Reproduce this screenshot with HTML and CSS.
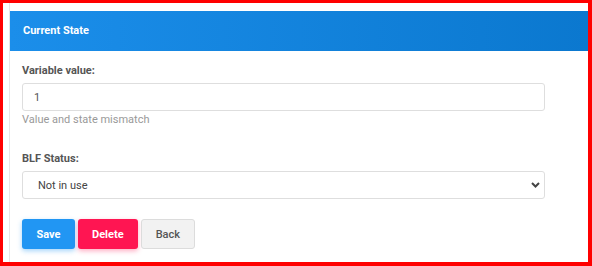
FILE: index.html
```html
<!DOCTYPE html>
<html lang="en">
<head>
    <meta charset="UTF-8">
    <title>Current State</title>
    <link rel="stylesheet" href="styles.css">
</head>
<body>
<div class="frame">
    <div class="page">
        <div class="card">
            <div class="card-header">Current State</div>
            <div class="card-body">
                <div class="form-group">
                    <label>Variable value:</label>
                    <input type="text" class="form-control" value="1">
                    <div class="help">Value and state mismatch</div>
                </div>
                <div class="form-group">
                    <label>BLF Status:</label>
                    <div class="select-wrap">
                        <select class="form-control select">
                            <option>Not in use</option>
                            <option>In use</option>
                            <option>Ringing</option>
                        </select>
                        <svg class="chevron" width="9" height="6" viewBox="0 0 9 6">
                            <path d="M1 1 L4.5 4.5 L8 1" fill="none" stroke="#444" stroke-width="2"/>
                        </svg>
                    </div>
                </div>
                <div class="actions">
                    <button class="btn btn-save">Save</button>
                    <button class="btn btn-delete">Delete</button>
                    <button class="btn btn-back">Back</button>
                </div>
            </div>
        </div>
    </div>
</div>
</body>
</html>
```

FILE: styles.css
```css
html, body {
    margin: 0;
    height: 100%;
}

body {
    font-family: Roboto, "Liberation Sans", sans-serif;
    color: #555;
    background: #fff;
}

.frame {
    box-sizing: border-box;
    width: 592px;
    height: 266px;
    border: solid #ff0000;
    border-width: 3px 4px 4px 3px;
    overflow: hidden;
}

.page {
    height: 100%;
    padding-left: 6px;
}

.card {
    height: 100%;
    border-left: 1px solid #e6e6e6;
    padding-top: 8px;
    box-sizing: border-box;
}

.card-header {
    height: 40px;
    line-height: 40px;
    padding-left: 13px;
    background: linear-gradient(to right, #1b8eea, #0b78cf);
    color: #fff;
    font-size: 11px;
    font-weight: bold;
}

.card-body {
    width: 523px;
    padding: 12px 0 0 12px;
}

.form-group {
    margin-bottom: 23px;
}

label {
    display: block;
    font-size: 11px;
    font-weight: bold;
    line-height: 16px;
    margin-bottom: 4px;
    color: #555;
}

.form-control {
    display: block;
    box-sizing: border-box;
    width: 100%;
    height: 28px;
    border: 1px solid #dedede;
    border-radius: 3px;
    background: #fff;
    padding: 0 11px;
    font-family: Roboto, "Liberation Sans", sans-serif;
    font-size: 11px;
    color: #555;
    outline: none;
}

.help {
    font-size: 11px;
    line-height: 16px;
    margin-top: 1px;
    color: #999;
}

.select-wrap {
    position: relative;
}

.select {
    -webkit-appearance: none;
    appearance: none;
    padding-left: 15px;
    color: #444;
}

.chevron {
    position: absolute;
    right: 5px;
    top: 11px;
}

.actions {
    margin-top: -3px;
    display: flex;
    gap: 3px;
}

.btn {
    height: 30px;
    padding: 0 14.5px;
    border: none;
    border-radius: 3px;
    font-family: Roboto, "Liberation Sans", sans-serif;
    font-size: 11px;
    font-weight: bold;
    color: #fff;
    cursor: pointer;
}

.btn-save {
    background: #2196f3;
    box-shadow: 0 2px 5px rgba(33, 150, 243, 0.4);
}

.btn-delete {
    padding: 0 14px;
    background: #ff1552;
    box-shadow: 0 2px 5px rgba(255, 21, 82, 0.35);
}

.btn-back {
    padding: 0 14px;
    background: #f2f2f2;
    border: 1px solid #dcdcdc;
    color: #555;
    font-weight: 500;
}
```
